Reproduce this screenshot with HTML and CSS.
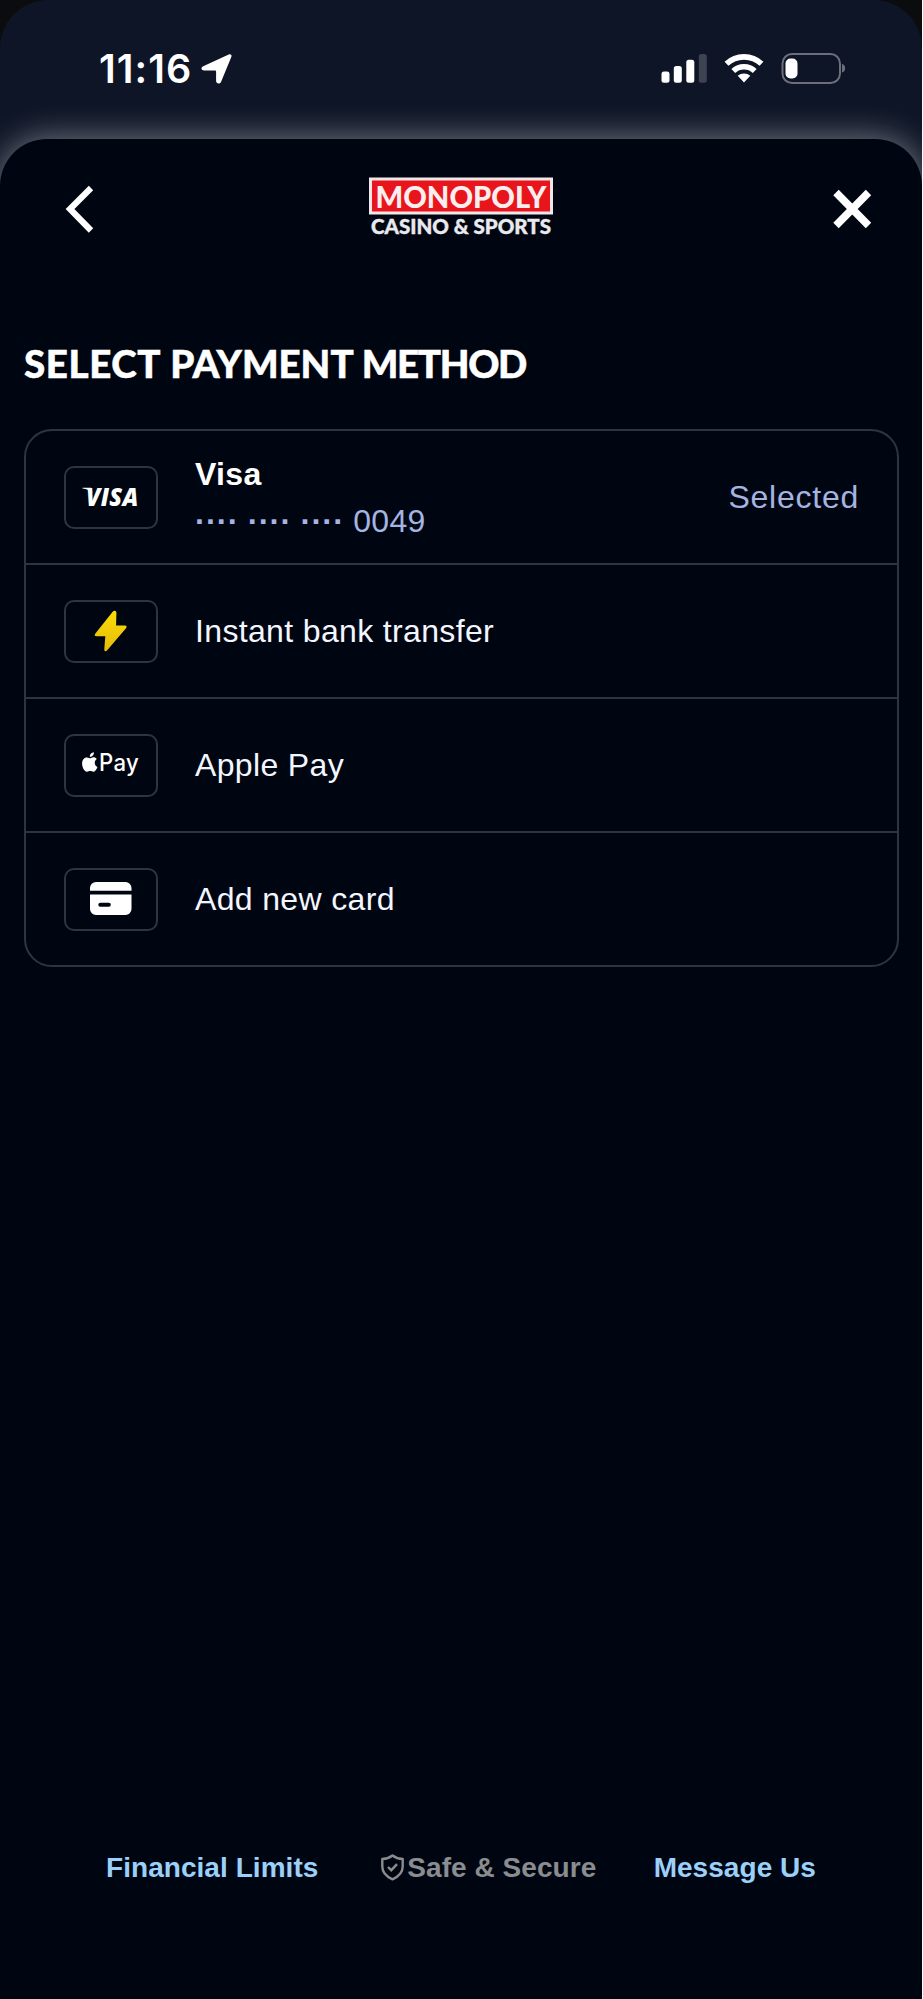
FILE: index.html
```html
<!DOCTYPE html>
<html lang="en">
<head>
<meta charset="utf-8">
<title>Select payment method</title>
<link rel="stylesheet" href="styles.css">
</head>
<body>
<div class="device">
<div class="screen">
  <div class="status">
    <div class="clock">
      <span class="time">11:16</span>
      <svg class="location" width="32" height="32" viewBox="0 0 32 32"><path d="M2.200 13.200 27.700 1.400c2-.9 3.500.7 2.600 2.600L20 29c-1.100 2.400-4.900 2-4.900-.9V18.700c0-.9-.4-1.300-1.300-1.300H3.200c-3 0-3.700-3-1-4.200z" fill="#fff"/></svg>
    </div>
    <div class="indicators">
      <svg width="46" height="30" viewBox="0 0 46 30"><g fill="#fff"><rect x="0.500" y="18.500" width="8" height="11.200" rx="2.500"/><rect x="12.800" y="13" width="8" height="16.700" rx="2.500"/><rect x="25.300" y="6.800" width="8" height="22.900" rx="2.500"/><rect x="37.800" y="1" width="8" height="28.700" rx="2.500" opacity=".2"/></g></svg>
      <svg width="40" height="30" viewBox="0 0 40 30"><g fill="none" stroke="#fff" stroke-width="5.600"><path d="M2.500 10.800a25.500 25.500 0 0 1 35 0"/><path d="M9.300 18a15.700 15.700 0 0 1 21.400 0"/></g><path d="M13.700 22.800a9.500 9.500 0 0 1 12.600 0L20 29.500z" fill="#fff"/></svg>
      <svg width="65" height="31" viewBox="0 0 65 31"><rect x="1.500" y="1" width="57.500" height="29" rx="9.500" fill="none" stroke="#6c6e7a" stroke-width="2"/><rect x="4.500" y="5.500" width="12" height="20" rx="5" fill="#fff"/><path d="M61 11c4.200 1 4.200 7.500 0 8.500z" fill="#6c6e7a"/></svg>
    </div>
  </div>
  <main class="sheet">
    <header class="bar">
      <svg width="30" height="48" viewBox="0 0 30 48"><path d="M26 2 5 23l21 21.500" fill="none" stroke="#fff" stroke-width="6.200"/></svg>
      <svg class="brand" width="184" height="68" viewBox="0 -4 184 68"><rect x="1.500" y="2" width="181" height="34" fill="#e9151d" stroke="#f1e6e8" stroke-width="3"/><text class="brand-name" x="6.500" y="30.500" textLength="171" lengthAdjust="spacingAndGlyphs">MONOPOLY</text><text class="brand-sub" x="2" y="57" textLength="180" lengthAdjust="spacingAndGlyphs">CASINO &amp; SPORTS</text></svg>
      <svg width="40" height="40" viewBox="0 0 40 40"><path d="m4 3.500 32.500 33M36.500 3.500 4 36.500" fill="none" stroke="#fff" stroke-width="7.600"/></svg>
    </header>
    <h1 class="title"><span class="wide">SELECT</span> PAYMENT <span class="tight">METHOD</span></h1>
    <ul class="methods">
      <li class="method">
        <span class="badge"><svg width="90" height="60" viewBox="0 0 90 60"><path d="M16.500 19.800h8.500l1.500 5c-2.500-2.400-5.500-3.700-10-4.300z" fill="#fff"/><text class="visa" x="20" y="37.500" textLength="52.500" lengthAdjust="spacingAndGlyphs">VISA</text></svg></span>
        <span class="label"><b class="name">Visa</b><span class="digits"><b>····</b> <b>····</b> <b>····</b> 0049</span></span>
        <span class="selected">Selected</span>
      </li>
      <li class="method">
        <span class="badge"><svg width="90" height="60" viewBox="0 0 90 60"><defs><linearGradient id="gold" x1="0" y1="0" x2="0" y2="1"><stop offset="0" stop-color="#fbdc04"/><stop offset="1" stop-color="#e6bb0c"/></linearGradient></defs><path d="M46.500 10 29.400 31.500c-1.300 1.700-.7 2.800 1.200 2.800h8.700l-1 13c-.2 2.200 1.600 2.500 2.900.9L60 26.200c1.200-1.600.6-2.700-1.200-2.700h-8.700l.3-12.700c0-2.100-2.300-2.800-3.900-.8z" fill="url(#gold)"/></svg></span>
        <span class="label">Instant bank transfer</span>
      </li>
      <li class="method">
        <span class="badge"><svg width="90" height="60" viewBox="0 0 90 60"><g fill="#fff"><path d="M30.800 23c-1.400-2-3.800-2.200-5.700-1.100-.8.400-1.200.4-2 0-3-1.500-6.800.3-7 5.300-.1 4 2.200 8 4.700 8.600 1.200.2 2-.7 3.400-.7s2 .8 3.400.7c1.700-.2 3.200-2.800 3.900-4.800-3.600-1.700-3.500-6.300-.7-8z"/><path d="M27.900 16.300c.2 2.400-1.700 4.600-4.100 4.500-.2-2.300 1.900-4.400 4.100-4.500z"/></g><text class="pay" x="33" y="35.300" textLength="40" lengthAdjust="spacingAndGlyphs">Pay</text></svg></span>
        <span class="label">Apple Pay</span>
      </li>
      <li class="method">
        <span class="badge"><svg width="90" height="60" viewBox="0 0 90 60"><path d="M24 20.700v-2.700a6 6 0 0 1 6-6h29.500a6 6 0 0 1 6 6v2.700zM24 24.500h41.500v14.500a6 6 0 0 1-6 6h-29.500a6 6 0 0 1-6-6z" fill="#fff"/><path d="M34.300 34.800h8.500" stroke="#000611" stroke-width="4" stroke-linecap="round"/></svg></span>
        <span class="label">Add new card</span>
      </li>
    </ul>
    <footer class="footer">
      <a class="link">Financial Limits</a>
      <span class="secure"><svg width="24" height="27" viewBox="0 0 24 27"><path d="M12.500 1.500C9.500 3.800 6 4.800 2.300 5v7.500c0 6 4 10 10.200 12.800 6.200-2.800 10.200-6.800 10.200-12.800V5C19 4.800 15.500 3.800 12.500 1.500z" fill="none" stroke="#8b8c90" stroke-width="2.400" stroke-linejoin="round"/><path d="m8 13 3.300 3.200 5.700-6" fill="none" stroke="#8b8c90" stroke-width="2.400"/></svg>Safe &amp; Secure</span>
      <a class="link">Message Us</a>
    </footer>
  </main>
</div>
</div>
</body>
</html>
```
FILE: styles.css
```css
* { box-sizing: border-box; }
body { margin: 0; background: #fff; font-family: "Liberation Sans", Arial, sans-serif; color: #f4f6ff; }
svg { display: block; flex: none; overflow: visible; }
.device { width: 922px; background: #0b0c0e; }
.screen { height: 1999px; border-radius: 48px 48px 0 0; overflow: hidden; background: #0e1526; display: flex; flex-direction: column; }
.status { height: 139px; flex: none; display: flex; justify-content: space-between; align-items: flex-start; padding: 53px 76px 0 99px; }
.clock { display: flex; gap: 9px; }
.time { font: 600 39.500px/32px Inter, sans-serif; color: #fff; width: 93px; white-space: nowrap; letter-spacing: 1.100px; }
.indicators { display: flex; gap: 17px; }
.sheet { flex: 1; border-radius: 47px 47px 0 0; background: #000611; box-shadow: 0 0 34px rgba(255,255,255,.46); display: flex; flex-direction: column; padding: 0 23px 0 24px; }
.bar { display: flex; align-items: flex-start; padding: 38px 27px 0 41px; height: 189px; }
.bar svg:first-child { margin-top: 9px; }
.bar svg:last-child { margin: 12px 0 0 auto; }
.brand { margin: -4px 0 0 274px; }
.brand-name { font: 900 31px Lato, sans-serif; fill: #fbeeee; }
.brand-sub { font: 900 20.500px Lato, sans-serif; fill: #e9e9ee; stroke: #e9e9ee; stroke-width: .4px; }
.title { margin: 13px 0 0; height: 88px; font: 900 38.500px/44px Lato, sans-serif; color: #fff; white-space: nowrap; -webkit-text-stroke: .5px #fff; }
.wide { letter-spacing: .6px; }
.tight { letter-spacing: -1.300px; }
.methods { list-style: none; margin: 0; padding: 0; width: 875px; border: 2px solid #30343f; border-radius: 28px; }
.method { height: 134px; display: flex; align-items: center; padding: 0 38px 0 37.500px; border-bottom: 2px solid #30343f; font-size: 32px; letter-spacing: .35px; }
.method:last-child { height: 132px; border-bottom: 0; }
.badge { width: 94px; height: 63px; border: 2px solid #30343f; border-radius: 10px; margin-right: 37.500px; }
.label { display: flex; flex-direction: column; }
.name { line-height: 40px; font-weight: 700; color: #fff; }
.digits { color: #a6b4e2; line-height: 40px; margin-top: 7px; letter-spacing: .25px; }
.selected { margin-left: auto; color: #a6b4e2; letter-spacing: .75px; }
.visa { font: italic 800 24.500px "Open Sans", sans-serif; fill: #fff; }
.pay { font: 500 24px Inter, sans-serif; fill: #fff; }
.footer { margin-top: auto; height: 147px; display: flex; justify-content: space-between; padding: 0 83px 0 82px; font-weight: 700; font-size: 28px; line-height: 32px; letter-spacing: .05px; }
.link { color: #9bd0fa; }
.secure { color: #8b8c90; display: flex; gap: 3.500px; padding-left: 4px; }
.secure svg { margin-top: 2px; }
```
